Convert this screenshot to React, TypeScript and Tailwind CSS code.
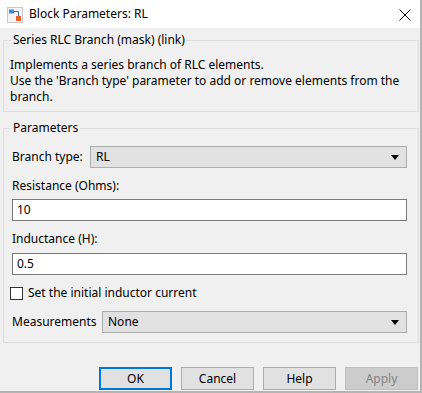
import React from 'react';

const font = { fontFamily: '"Noto Sans", "Open Sans", Arial, sans-serif' };

function BlockIcon() {
  return (
    <svg width="16" height="16" viewBox="0 0 16 16">
      <rect x="0.5" y="0.5" width="15" height="15" fill="#f4f4f4" stroke="#c8c8c8" />
      <rect x="2" y="2.5" width="5" height="4" fill="#3a8fd8" />
      <path d="M7 4.5 H11.5 V9" stroke="#3a6ea8" strokeWidth="1" fill="none" />
      <rect x="9" y="9" width="5" height="5" fill="#e8632b" />
    </svg>
  );
}

function DropArrow() {
  return (
    <svg width="8" height="5" viewBox="0 0 8 5">
      <path d="M0 0 H8 L4 5 Z" fill="#000" />
    </svg>
  );
}

function Select({ value, className }: { value: string; className: string }) {
  return (
    <div
      className={`h-[22px] flex items-center justify-between bg-[#e1e1e1] border border-[#adadad] pl-[5px] pr-[7px] ${className}`}
    >
      <span>{value}</span>
      <DropArrow />
    </div>
  );
}

function TextField({ value }: { value: string }) {
  return (
    <div className="h-[22px] flex items-center bg-white border border-[#7a7a7a] px-[4px] w-[395px]">
      {value}
    </div>
  );
}

function Btn({ label, variant }: { label: string; variant?: 'default' | 'disabled' }) {
  if (variant === 'default') {
    return (
      <div className="w-[73px] h-[23px] flex items-center justify-center bg-[#e1e1e1] border-2 border-[#0078d7]">
        {label}
      </div>
    );
  }
  if (variant === 'disabled') {
    return (
      <div className="w-[73px] h-[23px] flex items-center justify-center bg-[#cccccc] border border-[#bfbfbf] text-[#838383]">
        {label}
      </div>
    );
  }
  return (
    <div className="w-[73px] h-[23px] flex items-center justify-center bg-[#e1e1e1] border border-[#adadad]">
      {label}
    </div>
  );
}

export default function App() {
  return (
    <div
      style={font}
      className="w-[422px] h-[393px] bg-[#f0f0f0] text-[12px] leading-[16px] text-black border-r-2 border-b-2 border-[#b4b4b4] flex flex-col overflow-hidden"
    >
      {/* Title bar */}
      <div className="h-[28px] bg-white flex items-center shrink-0">
        <div className="ml-[7px] mt-[2px]">
          <BlockIcon />
        </div>
        <span className="ml-[6px]">Block Parameters: RL</span>
        <div className="ml-auto mr-[9px] mt-[1px]">
          <svg width="12" height="12" viewBox="0 0 12 12">
            <path d="M0.5 0.5 L11.5 11.5 M11.5 0.5 L0.5 11.5" stroke="#000" strokeWidth="1" />
          </svg>
        </div>
      </div>

      {/* Description group */}
      <fieldset className="ml-[3px] mt-[4px] w-[416px] border border-[#dcdcdc] pb-[6px]">
        <legend className="ml-[7px] px-[2px]">Series RLC Branch (mask) (link)</legend>
        <div className="pl-[6px] pt-[9px]">
          <div>Implements a series branch of RLC elements.</div>
          <div className="whitespace-nowrap">Use the 'Branch type' parameter to add or remove elements from the</div>
          <div>branch.</div>
        </div>
      </fieldset>

      {/* Parameters group */}
      <fieldset className="ml-[3px] mt-[8px] w-[416px] border border-[#dcdcdc] pb-[9px]">
        <legend className="ml-[7px] px-[2px]">Parameters</legend>
        <div className="pl-[8px] pt-[10px] flex flex-col">
          <div className="flex items-center">
            <span className="w-[78px]">Branch type:</span>
            <Select value="RL" className="w-[317px]" />
          </div>
          <div className="mt-[10px]">Resistance (Ohms):</div>
          <div className="mt-[5px]">
            <TextField value="10" />
          </div>
          <div className="mt-[10px]">Inductance (H):</div>
          <div className="mt-[6px]">
            <TextField value="0.5" />
          </div>
          <div className="mt-[10px] flex items-center">
            <div className="ml-[-2px] w-[13px] h-[13px] bg-white border border-[#333333]" />
            <span className="ml-[5px]">Set the initial inductor current</span>
          </div>
          <div className="mt-[10px] flex items-center">
            <span className="w-[90px]">Measurements</span>
            <Select value="None" className="w-[305px]" />
          </div>
        </div>
      </fieldset>

      {/* Buttons */}
      <div className="mt-auto mb-[1px] flex justify-end gap-[9px] pr-[2px]">
        <Btn label="OK" variant="default" />
        <Btn label="Cancel" />
        <Btn label="Help" />
        <Btn label="Apply" variant="disabled" />
      </div>
    </div>
  );
}
